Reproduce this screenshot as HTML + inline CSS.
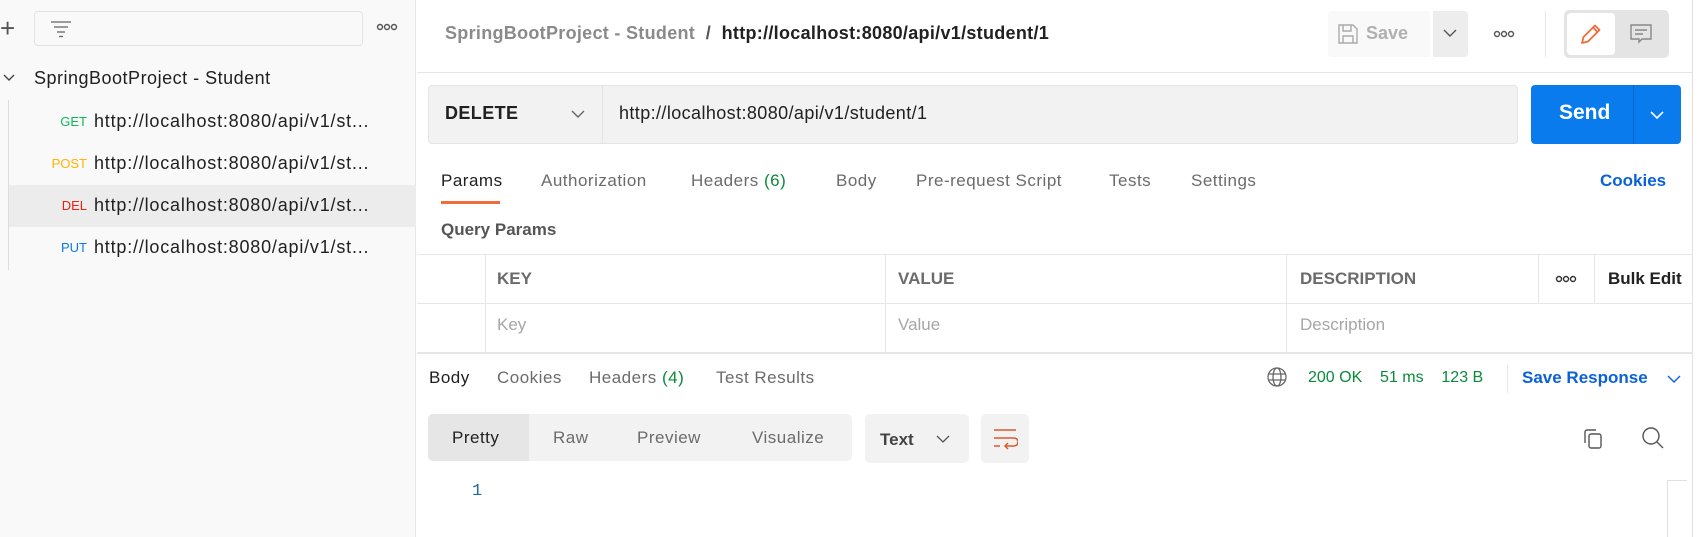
<!DOCTYPE html>
<html><head><style>
*{box-sizing:border-box;margin:0;padding:0}
body{width:1701px;height:537px;overflow:hidden;background:#fff;font-family:"Liberation Sans",sans-serif;font-size:16px;color:#212121;position:relative}
.a{position:absolute;white-space:nowrap}
.g{color:#6b6b6b}
.t{letter-spacing:.5px}
</style></head><body>
<div class="a" style="left:0;top:0;width:416px;height:537px;background:#f9f9f9;border-right:1px solid #e6e6e6"></div>
<div class="a" style="left:0;top:18px;font-size:26px;color:#555;line-height:20px;font-weight:300">+</div>
<div class="a" style="left:34px;top:11px;width:329px;height:35px;border:1px solid #e2e2e2;border-radius:4px;background:#f9f9f9"></div>
<svg class="a" style="left:50px;top:20px" width="22" height="18"><g stroke="#666" stroke-width="1.3"><line x1="1" y1="2" x2="21" y2="2"/><line x1="4" y1="7" x2="18" y2="7"/><line x1="7" y1="12" x2="15" y2="12"/><line x1="9" y1="16.5" x2="13" y2="16.5"/></g></svg>
<svg class="a" style="left:376px;top:22px" width="22" height="10"><g fill="none" stroke="#555" stroke-width="1.4"><circle cx="4" cy="5" r="2.5"/><circle cx="11" cy="5" r="2.5"/><circle cx="18" cy="5" r="2.5"/></g></svg>
<svg class="a" style="left:3px;top:73px" width="12" height="10"><path d="M1 2l5 5 5-5" fill="none" stroke="#444" stroke-width="1.4"/></svg>
<div class="a" style="left:34px;top:68px;font-size:18px;letter-spacing:.5px;color:#212121">SpringBootProject - Student</div>
<div class="a" style="left:8px;top:100px;width:1px;height:170px;background:#ddd"></div>
<div class="a" style="left:9px;top:185px;width:407px;height:42px;background:#ececec"></div>
<div class="a" style="left:0;top:114px;width:87px;text-align:right;font-size:13px;color:#0cbb52">GET</div>
<div class="a" style="left:0;top:156px;width:87px;text-align:right;font-size:13px;color:#ffb400">POST</div>
<div class="a" style="left:0;top:198px;width:87px;text-align:right;font-size:13px;color:#eb2013">DEL</div>
<div class="a" style="left:0;top:240px;width:87px;text-align:right;font-size:13px;color:#097bed">PUT</div>
<div class="a" style="left:94px;top:111px;font-size:18px;letter-spacing:.8px;color:#212121">http://localhost:8080/api/v1/st...</div>
<div class="a" style="left:94px;top:153px;font-size:18px;letter-spacing:.8px;color:#212121">http://localhost:8080/api/v1/st...</div>
<div class="a" style="left:94px;top:195px;font-size:18px;letter-spacing:.8px;color:#212121">http://localhost:8080/api/v1/st...</div>
<div class="a" style="left:94px;top:237px;font-size:18px;letter-spacing:.8px;color:#212121">http://localhost:8080/api/v1/st...</div>
<div class="a" style="left:445px;top:23px;font-size:18px;letter-spacing:.3px;font-weight:bold"><span style="color:#8a8a8a">SpringBootProject - Student</span><span style="color:#555">&nbsp; / &nbsp;</span><span>http://localhost:8080/api/v1/student/1</span></div>
<div class="a" style="left:417px;top:72px;width:1276px;height:1px;background:#e6e6e6"></div>
<div class="a" style="left:1692px;top:0;width:1px;height:537px;background:#e0e0e0"></div>
<div class="a" style="left:1328px;top:11px;width:102px;height:46px;background:#f9f9f9;border-radius:4px 0 0 4px"></div>
<svg class="a" style="left:1337px;top:23px" width="22" height="22"><path d="M2 2h14l4 4v14H2z M6 2v6h8V2 M6 20v-7h10v7" fill="none" stroke="#aaa" stroke-width="1.4"/></svg>
<div class="a" style="left:1366px;top:23px;font-size:18px;font-weight:bold;color:#b0b0b0">Save</div>
<div class="a" style="left:1433px;top:11px;width:35px;height:46px;background:#ededed;border-radius:0 4px 4px 0"></div>
<svg class="a" style="left:1443px;top:28px" width="14" height="10"><path d="M1 2l6 6 6-6" fill="none" stroke="#555" stroke-width="1.4"/></svg>
<svg class="a" style="left:1493px;top:29px" width="22" height="10"><g fill="none" stroke="#555" stroke-width="1.4"><circle cx="4" cy="5" r="2.5"/><circle cx="11" cy="5" r="2.5"/><circle cx="18" cy="5" r="2.5"/></g></svg>
<div class="a" style="left:1545px;top:11px;width:1px;height:46px;background:#e6e6e6"></div>
<div class="a" style="left:1564px;top:10px;width:105px;height:48px;background:#e4e4e4;border-radius:5px"></div>
<div class="a" style="left:1567px;top:13px;width:48px;height:42px;background:#fff;border-radius:4px"></div>
<svg class="a" style="left:1579px;top:22px" width="24" height="24"><path d="M3 21l1.5-6L16 3.5l4.5 4.5L9 19.5z M14 5.5l4.5 4.5" fill="none" stroke="#f26b3a" stroke-width="1.8" stroke-linejoin="round"/></svg>
<svg class="a" style="left:1629px;top:22px" width="24" height="24"><path d="M2 3h20v14H13l-3 3v-3H2z M6 8h12 M6 12h8" fill="none" stroke="#888" stroke-width="1.4"/></svg>
<div class="a" style="left:428px;top:85px;width:1090px;height:59px;background:#f2f2f2;border:1px solid #e4e4e4;border-radius:4px"></div>
<div class="a" style="left:602px;top:86px;width:1px;height:57px;background:#e4e4e4"></div>
<div class="a" style="left:445px;top:103px;font-size:18px;font-weight:bold;letter-spacing:.4px">DELETE</div>
<svg class="a" style="left:571px;top:109px" width="14" height="10"><path d="M1 2l6 6 6-6" fill="none" stroke="#666" stroke-width="1.4"/></svg>
<div class="a" style="left:619px;top:103px;font-size:18px;letter-spacing:.4px">http://localhost:8080/api/v1/student/1</div>
<div class="a" style="left:1531px;top:85px;width:150px;height:59px;background:#097bed;border-radius:4px"></div>
<div class="a" style="left:1633px;top:85px;width:1px;height:59px;background:#0868d0"></div>
<div class="a" style="left:1559px;top:101px;font-size:21px;font-weight:bold;color:#fff">Send</div>
<svg class="a" style="left:1650px;top:110px" width="14" height="10"><path d="M1 2l6 6 6-6" fill="none" stroke="#fff" stroke-width="1.6"/></svg>
<div class="a t" style="left:441px;top:171px;font-size:17px">Params</div>
<div class="a" style="left:441px;top:201px;width:59px;height:3px;background:#f26b3a"></div>
<div class="a g t" style="left:541px;top:171px;font-size:17px">Authorization</div>
<div class="a g t" style="left:691px;top:171px;font-size:17px">Headers <span style="color:#0b8a3c">(6)</span></div>
<div class="a g t" style="left:836px;top:171px;font-size:17px">Body</div>
<div class="a g t" style="left:916px;top:171px;font-size:17px">Pre-request Script</div>
<div class="a g t" style="left:1109px;top:171px;font-size:17px">Tests</div>
<div class="a g t" style="left:1191px;top:171px;font-size:17px">Settings</div>
<div class="a" style="left:1600px;top:171px;font-size:17px;font-weight:bold;color:#0b62d6">Cookies</div>
<div class="a" style="left:441px;top:220px;font-size:17px;font-weight:bold;color:#555">Query Params</div>
<div class="a" style="left:417px;top:254px;width:1276px;height:1px;background:#e6e6e6"></div>
<div class="a" style="left:417px;top:303px;width:1276px;height:1px;background:#e6e6e6"></div>
<div class="a" style="left:485px;top:254px;width:1px;height:98px;background:#e6e6e6"></div>
<div class="a" style="left:885px;top:254px;width:1px;height:98px;background:#e6e6e6"></div>
<div class="a" style="left:1286px;top:254px;width:1px;height:98px;background:#e6e6e6"></div>
<div class="a" style="left:1538px;top:254px;width:1px;height:49px;background:#e6e6e6"></div>
<div class="a" style="left:1594px;top:254px;width:1px;height:49px;background:#e6e6e6"></div>
<div class="a g" style="left:497px;top:269px;font-size:17px;font-weight:bold">KEY</div>
<div class="a g" style="left:898px;top:269px;font-size:17px;font-weight:bold">VALUE</div>
<div class="a g" style="left:1300px;top:269px;font-size:17px;font-weight:bold">DESCRIPTION</div>
<svg class="a" style="left:1555px;top:274px" width="22" height="10"><g fill="none" stroke="#333" stroke-width="1.4"><circle cx="4" cy="5" r="2.5"/><circle cx="11" cy="5" r="2.5"/><circle cx="18" cy="5" r="2.5"/></g></svg>
<div class="a" style="left:1608px;top:269px;font-size:17px;font-weight:bold">Bulk Edit</div>
<div class="a" style="left:497px;top:315px;font-size:17px;color:#a6a6a6">Key</div>
<div class="a" style="left:898px;top:315px;font-size:17px;color:#a6a6a6">Value</div>
<div class="a" style="left:1300px;top:315px;font-size:17px;color:#a6a6a6">Description</div>
<div class="a" style="left:417px;top:352px;width:1276px;height:2px;background:#e6e6e6"></div>
<div class="a t" style="left:429px;top:368px;font-size:17px">Body</div>
<div class="a g t" style="left:497px;top:368px;font-size:17px">Cookies</div>
<div class="a g t" style="left:589px;top:368px;font-size:17px">Headers <span style="color:#0b8a3c">(4)</span></div>
<div class="a g t" style="left:716px;top:368px;font-size:17px">Test Results</div>
<svg class="a" style="left:1266px;top:366px" width="22" height="22"><g fill="none" stroke="#666" stroke-width="1.3"><circle cx="11" cy="11" r="9"/><ellipse cx="11" cy="11" rx="4" ry="9"/><line x1="2" y1="8" x2="20" y2="8"/><line x1="2" y1="14" x2="20" y2="14"/></g></svg>
<div class="a" style="left:1308px;top:369px;font-size:16px;color:#0b8a3c">200 OK &nbsp;&nbsp; 51 ms &nbsp;&nbsp; 123 B</div>
<div class="a" style="left:1507px;top:365px;width:1px;height:28px;background:#e6e6e6"></div>
<div class="a" style="left:1522px;top:368px;font-size:17px;font-weight:bold;color:#0b62d6">Save Response</div>
<svg class="a" style="left:1667px;top:374px" width="14" height="10"><path d="M1 2l6 6 6-6" fill="none" stroke="#0b62d6" stroke-width="1.4"/></svg>
<div class="a" style="left:428px;top:414px;width:424px;height:47px;background:#f2f2f2;border-radius:5px"></div>
<div class="a" style="left:428px;top:414px;width:101px;height:47px;background:#e6e6e6;border-radius:5px 0 0 5px"></div>
<div class="a t" style="left:452px;top:428px;font-size:17px">Pretty</div>
<div class="a g t" style="left:553px;top:428px;font-size:17px">Raw</div>
<div class="a g t" style="left:637px;top:428px;font-size:17px">Preview</div>
<div class="a g t" style="left:752px;top:428px;font-size:17px">Visualize</div>
<div class="a" style="left:865px;top:414px;width:104px;height:49px;background:#f2f2f2;border-radius:5px"></div>
<div class="a" style="left:880px;top:430px;font-size:17px;font-weight:bold;color:#444">Text</div>
<svg class="a" style="left:936px;top:434px" width="14" height="10"><path d="M1 2l6 6 6-6" fill="none" stroke="#555" stroke-width="1.3"/></svg>
<div class="a" style="left:981px;top:414px;width:48px;height:49px;background:#f2f2f2;border-radius:5px"></div>
<svg class="a" style="left:992px;top:428px" width="26" height="22"><path d="M2 2h22 M2 10h20a4 4 0 0 1 0 8h-9 M16 15l-3 3 3 3 M2 18h6" fill="none" stroke="#e0582c" stroke-width="1.5"/></svg>
<svg class="a" style="left:1581px;top:427px" width="24" height="24"><path d="M4 16V5a2 2 0 0 1 2-2h9" fill="none" stroke="#555" stroke-width="1.4"/><rect x="8" y="7" width="12" height="14" rx="2" fill="none" stroke="#555" stroke-width="1.4"/></svg>
<svg class="a" style="left:1640px;top:425px" width="26" height="26"><circle cx="11" cy="11" r="8" fill="none" stroke="#555" stroke-width="1.4"/><line x1="17" y1="17" x2="23" y2="23" stroke="#555" stroke-width="1.4"/></svg>
<div class="a" style="left:472px;top:482px;font-size:17px;color:#1f6b9e;font-family:'Liberation Mono',monospace">1</div>
<div class="a" style="left:1667px;top:480px;width:1px;height:57px;background:#e0e0e0"></div>
<div class="a" style="left:1667px;top:480px;width:20px;height:1px;background:#e0e0e0"></div>
</body></html>
